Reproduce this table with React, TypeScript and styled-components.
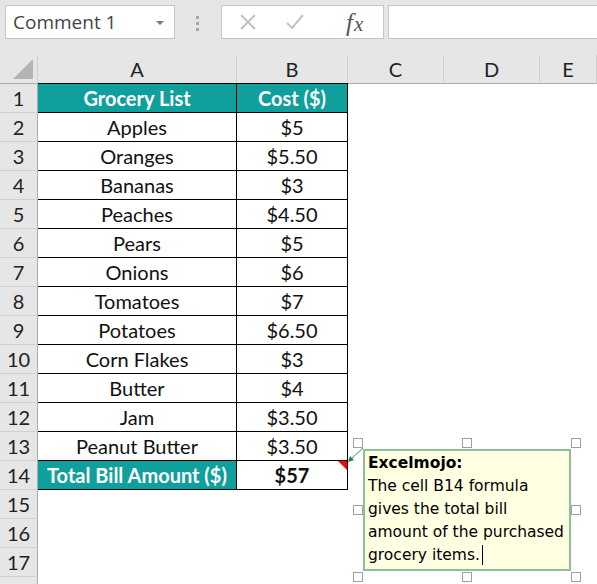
import styled, { createGlobalStyle } from 'styled-components';

const GlobalStyle = createGlobalStyle`
	body {
		margin: 0;
		background: #ffffff;
		font-family: Lato, "Open Sans", sans-serif;
	}
`;

const rows: [string, string][] = [
	['Apples', '$5'],
	['Oranges', '$5.50'],
	['Bananas', '$3'],
	['Peaches', '$4.50'],
	['Pears', '$5'],
	['Onions', '$6'],
	['Tomatoes', '$7'],
	['Potatoes', '$6.50'],
	['Corn Flakes', '$3'],
	['Butter', '$4'],
	['Jam', '$3.50'],
	['Peanut Butter', '$3.50'],
];

// handles round the selected comment box
const handles = [
	[353, 438],
	[462, 438],
	[571, 438],
	[353, 505],
	[571, 505],
	[353, 572],
	[462, 572],
	[571, 572],
];

const commentLines = ['The cell B14 formula', 'gives the total bill', 'amount of the purchased'];

const App = () => {
	return (
		<Page>
			<GlobalStyle />
			<Toolbar>
				<NameBox>
					<span>Comment 1</span>
					<DropArrow />
				</NameBox>
				<Grip>
					<i />
					<i />
					<i />
				</Grip>
				<ButtonBox>
					<ToolIcon>
						<svg width="18" height="18" viewBox="0 0 18 18">
							<path d="M2 2 L16 16 M16 2 L2 16" stroke="#c4c4c4" strokeWidth="2" fill="none" />
						</svg>
					</ToolIcon>
					<ToolIcon>
						<svg width="20" height="18" viewBox="0 0 20 18">
							<path d="M2 10 L7 15 L18 2" stroke="#c4c4c4" strokeWidth="2" fill="none" />
						</svg>
					</ToolIcon>
					<FxIcon>
						f<span>x</span>
					</FxIcon>
				</ButtonBox>
				<FormulaInput />
			</Toolbar>
			<Sheet>
				<Corner>
					<CornerTriangle />
				</Corner>
				{['A', 'B', 'C', 'D', 'E'].map((c) => (
					<ColHeader key={c}>{c}</ColHeader>
				))}

				<RowHeader>1</RowHeader>
				<Cell $head $boxed>Grocery List</Cell>
				<Cell $head $boxed>Cost ($)</Cell>
				<Cell />
				<Cell />
				<Cell />

				{rows.map(([item, cost], i) => (
					<Row key={item} num={i + 2} item={item} cost={cost} />
				))}

				<RowHeader>14</RowHeader>
				<Cell $head $boxed>Total Bill Amount ($)</Cell>
				<Cell $boxed $bold>
					$57
					<RedMark />
				</Cell>
				<Cell />
				<Cell />
				<Cell />

				{['15', '16', '17', ''].map((n) => (
					<EmptyRow key={n} num={n} />
				))}
			</Sheet>

			<Arrow width="20" height="20" viewBox="0 0 20 20">
				<path d="M16 1 L3 13" stroke="#3f8a5a" strokeWidth="1" fill="none" />
				<path d="M1 15 L3 9 L7 13 Z" fill="#2f7a4a" />
			</Arrow>
			{handles.map(([x, y]) => (
				<Handle key={`${x}-${y}`} style={{ left: x, top: y }} />
			))}
			<Comment>
				<b>Excelmojo:</b>
				{commentLines.map((line) => (
					<div key={line}>{line}</div>
				))}
				<div>
					grocery items.
					<Caret />
				</div>
			</Comment>
		</Page>
	);
};

const Row = ({ num, item, cost }: { num: number; item: string; cost: string }) => (
	<>
		<RowHeader>{num}</RowHeader>
		<Cell $boxed>{item}</Cell>
		<Cell $boxed>{cost}</Cell>
		<Cell />
		<Cell />
		<Cell />
	</>
);

const EmptyRow = ({ num }: { num: string }) => (
	<>
		<RowHeader>{num}</RowHeader>
		<Cell />
		<Cell />
		<Cell />
		<Cell />
		<Cell />
	</>
);

const Page = styled.div`
	position: relative;
	width: 597px;
	height: 584px;
	overflow: hidden;
`;
const Toolbar = styled.div`
	display: flex;
	align-items: flex-start;
	height: 55px;
	box-sizing: border-box;
	padding: 5px 0 0 5px;
	background: #e6e6e6;
`;
const NameBox = styled.div`
	display: flex;
	align-items: center;
	justify-content: space-between;
	width: 170px;
	height: 34px;
	box-sizing: border-box;
	padding: 0 10px 0 7px;
	background: #ffffff;
	border: 1px solid #c6c6c6;
	font-family: "Open Sans", sans-serif;
	font-size: 19px;
	color: #444444;
`;
const DropArrow = styled.span`
	width: 0;
	height: 0;
	border-left: 4px solid transparent;
	border-right: 4px solid transparent;
	border-top: 4px solid #777777;
	margin-top: 2px;
`;
const Grip = styled.div`
	display: flex;
	flex-direction: column;
	gap: 3px;
	margin: 11px 0 0 21px;
	& > i {
		display: block;
		width: 3px;
		height: 3px;
		background: #a6a6a6;
	}
`;
const ButtonBox = styled.div`
	display: flex;
	align-items: center;
	width: 163px;
	height: 34px;
	box-sizing: border-box;
	margin-left: 22px;
	background: #ffffff;
	border: 1px solid #c6c6c6;
`;
const ToolIcon = styled.div`
	display: flex;
	align-items: center;
	justify-content: center;
	width: 47px;
	height: 100%;
	&:first-child {
		margin-left: 2px;
	}
`;
const FxIcon = styled.div`
	margin-left: 28px;
	font-family: "Liberation Serif", serif;
	font-style: italic;
	font-size: 25px;
	line-height: 1;
	color: #555555;
	& > span {
		font-size: 21px;
		margin-left: 1px;
	}
`;
const FormulaInput = styled.div`
	flex: 1;
	height: 34px;
	box-sizing: border-box;
	margin-left: 4px;
	margin-right: -10px;
	background: #ffffff;
	border: 1px solid #c6c6c6;
`;
const Sheet = styled.div`
	display: grid;
	grid-template-columns: 38px 199px 111px 96px 96px 1fr;
	grid-template-rows: 29px repeat(18, 29px);
	font-family: Lato, "Open Sans", sans-serif;
	font-size: 20px;
	color: #111111;
`;
const Corner = styled.div`
	position: relative;
	background: #e6e6e6;
	border-right: 1px solid #cfcfcf;
	border-bottom: 1px solid #ababab;
`;
const CornerTriangle = styled.div`
	position: absolute;
	right: 4px;
	bottom: 4px;
	width: 0;
	height: 0;
	border-left: 20px solid transparent;
	border-bottom: 20px solid #b4b4b4;
`;
const ColHeader = styled.div`
	display: flex;
	align-items: center;
	justify-content: center;
	background: #e6e6e6;
	border-right: 1px solid #cfcfcf;
	border-bottom: 1px solid #ababab;
	color: #222222;
`;
const RowHeader = styled.div`
	display: flex;
	align-items: center;
	justify-content: center;
	background: #e6e6e6;
	border-right: 1px solid #ababab;
	border-bottom: 1px solid #cfcfcf;
	color: #222222;
`;
const Cell = styled.div<{ $head?: boolean; $boxed?: boolean; $bold?: boolean }>`
	position: relative;
	display: flex;
	align-items: center;
	justify-content: center;
	white-space: nowrap;
	border-right: 1px solid ${(p) => (p.$boxed ? '#000000' : 'transparent')};
	border-bottom: 1px solid ${(p) => (p.$boxed ? '#000000' : 'transparent')};
	margin-top: ${(p) => (p.$boxed ? '-1px' : '0')};
	border-top: ${(p) => (p.$boxed ? '1px solid #000000' : '0')};
	background: ${(p) => (p.$head ? '#0f9f9c' : '#ffffff')};
	color: ${(p) => (p.$head ? '#ffffff' : '#111111')};
	font-weight: ${(p) => (p.$head || p.$bold ? 700 : 400)};
`;
const RedMark = styled.span`
	position: absolute;
	top: 0;
	right: 0;
	width: 0;
	height: 0;
	border-left: 9px solid transparent;
	border-top: 9px solid #ff0000;
`;
const Arrow = styled.svg`
	position: absolute;
	left: 347px;
	top: 447px;
`;
const Handle = styled.div`
	position: absolute;
	width: 10px;
	height: 10px;
	box-sizing: border-box;
	background: #ffffff;
	border: 1px solid #a0a0a0;
`;
const Comment = styled.div`
	position: absolute;
	left: 363px;
	top: 449px;
	width: 208px;
	height: 122px;
	box-sizing: border-box;
	padding: 1px 2px 0 3px;
	background: #ffffe1;
	border: 2px solid #8fbf9a;
	font-family: "DejaVu Sans", sans-serif;
	font-size: 15.5px;
	line-height: 23px;
	white-space: nowrap;
	overflow: hidden;
	color: #000000;
`;
const Caret = styled.span`
	display: inline-block;
	width: 0;
	height: 20px;
	margin-left: 2px;
	vertical-align: -5px;
	border-left: 1px solid #000000;
`;

export default App;
